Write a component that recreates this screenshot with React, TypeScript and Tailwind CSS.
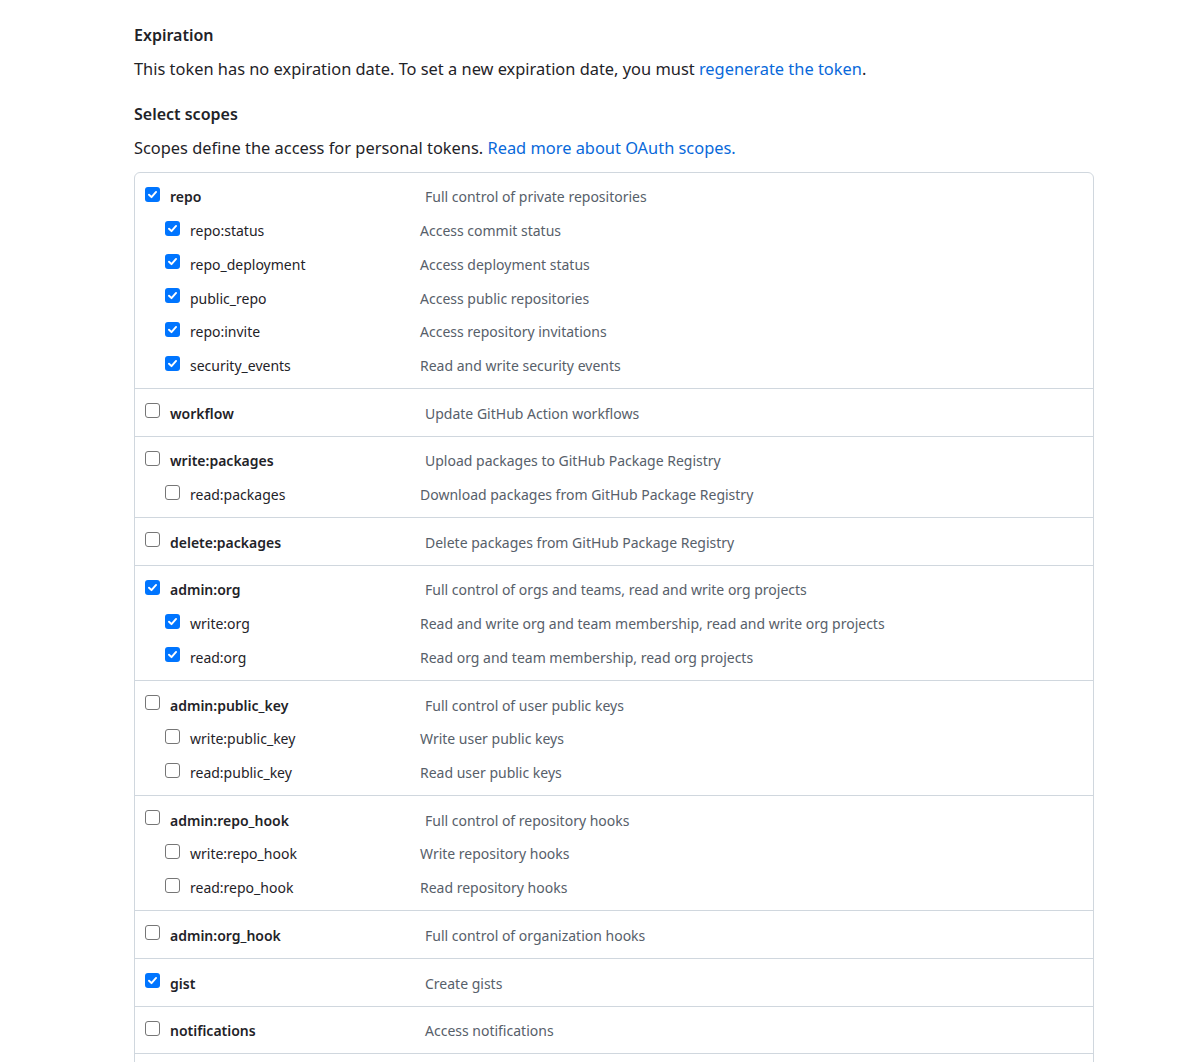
type Scope = { name: string; desc: string; checked: boolean; children?: { name: string; desc: string; checked: boolean }[] };

const scopes: Scope[] = [
  {
    name: "repo",
    desc: "Full control of private repositories",
    checked: true,
    children: [
      { name: "repo:status", desc: "Access commit status", checked: true },
      { name: "repo_deployment", desc: "Access deployment status", checked: true },
      { name: "public_repo", desc: "Access public repositories", checked: true },
      { name: "repo:invite", desc: "Access repository invitations", checked: true },
      { name: "security_events", desc: "Read and write security events", checked: true },
    ],
  },
  { name: "workflow", desc: "Update GitHub Action workflows", checked: false },
  {
    name: "write:packages",
    desc: "Upload packages to GitHub Package Registry",
    checked: false,
    children: [{ name: "read:packages", desc: "Download packages from GitHub Package Registry", checked: false }],
  },
  { name: "delete:packages", desc: "Delete packages from GitHub Package Registry", checked: false },
  {
    name: "admin:org",
    desc: "Full control of orgs and teams, read and write org projects",
    checked: true,
    children: [
      { name: "write:org", desc: "Read and write org and team membership, read and write org projects", checked: true },
      { name: "read:org", desc: "Read org and team membership, read org projects", checked: true },
    ],
  },
  {
    name: "admin:public_key",
    desc: "Full control of user public keys",
    checked: false,
    children: [
      { name: "write:public_key", desc: "Write user public keys", checked: false },
      { name: "read:public_key", desc: "Read user public keys", checked: false },
    ],
  },
  {
    name: "admin:repo_hook",
    desc: "Full control of repository hooks",
    checked: false,
    children: [
      { name: "write:repo_hook", desc: "Write repository hooks", checked: false },
      { name: "read:repo_hook", desc: "Read repository hooks", checked: false },
    ],
  },
  { name: "admin:org_hook", desc: "Full control of organization hooks", checked: false },
  { name: "gist", desc: "Create gists", checked: true },
  { name: "notifications", desc: "Access notifications", checked: false },
];

function Box({ checked }: { checked: boolean }) {
  if (checked) {
    return (
      <span className="flex h-[15px] w-[15px] shrink-0 items-center justify-center rounded-[3px] bg-[#0075ff]">
        <svg width="11" height="11" viewBox="0 0 12 12" fill="none">
          <path d="M2.2 6.3 L4.9 8.9 L9.9 3.2" stroke="white" strokeWidth="2.1" strokeLinecap="round" strokeLinejoin="round" />
        </svg>
      </span>
    );
  }
  return <span className="block h-[15px] w-[15px] shrink-0 rounded-[3px] border-[1.5px] border-[#767676] bg-white" />;
}

function Line({ name, desc, checked, child }: { name: string; desc: string; checked: boolean; child?: boolean }) {
  return (
    <div className={`flex h-[33.75px] items-center ${child ? "pl-[30px]" : "pl-[10px]"}`}>
      <div className={`flex items-center ${child ? "w-[255px]" : "w-[280px]"}`}>
        <span className="-mt-[5px] block">
          <Box checked={checked} />
        </span>
        <span className={`ml-[10px] text-[14px] text-[#1f2328] ${child ? "font-normal" : "font-semibold"}`}>{name}</span>
      </div>
      <span className="text-[14px] text-[#57606a]">{desc}</span>
    </div>
  );
}

export default function App() {
  return (
    <div className="h-[1062px] overflow-hidden bg-white" style={{ fontFamily: '"Noto Sans", sans-serif' }}>
      <div className="ml-[134px] w-[960px] pt-[23px]">
        <h3 className="h-6 text-[16px] font-semibold leading-6 text-[#1f2328]">Expiration</h3>
        <p className="mt-[10px] text-[16.4px] leading-6 text-[#1f2328]">
          This token has no expiration date. To set a new expiration date, you must{" "}
          <a className="text-[#0969da]" href="#">regenerate the token</a>.
        </p>
        <h3 className="mt-[21px] h-6 text-[16px] font-semibold leading-6 text-[#1f2328]">Select scopes</h3>
        <p className="mt-[10px] text-[16.4px] leading-6 text-[#1f2328]">
          Scopes define the access for personal tokens.{" "}
          <a className="text-[#0969da]" href="#">Read more about OAuth scopes.</a>
        </p>
        <div className="mt-[12px] h-[900px] rounded-[6px] border border-[#d0d7de]">
          {scopes.map((s) => (
            <div key={s.name} className="border-b border-[#d0d7de] pt-[7px] pb-[5.9px]">
              <Line name={s.name} desc={s.desc} checked={s.checked} />
              {s.children?.map((c) => (
                <Line key={c.name} name={c.name} desc={c.desc} checked={c.checked} child />
              ))}
            </div>
          ))}
        </div>
      </div>
    </div>
  );
}
